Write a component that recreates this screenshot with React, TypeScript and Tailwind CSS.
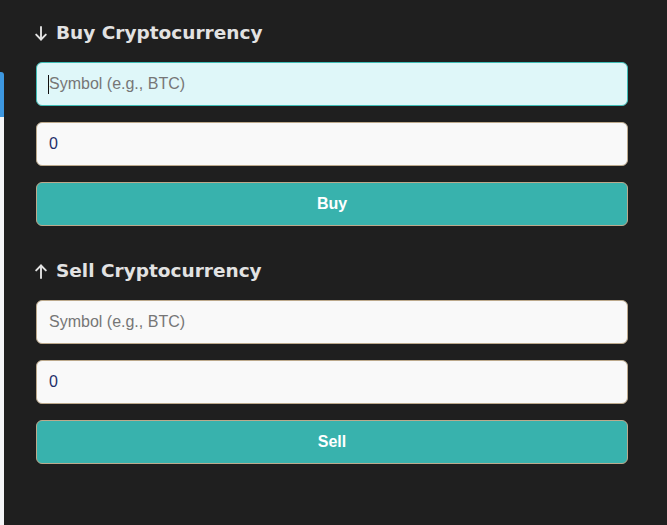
import React from "react";

function Arrow({ up }: { up?: boolean }) {
  return (
    <svg width="12" height="15" viewBox="0 0 12 15" className={up ? "shrink-0 rotate-180" : "shrink-0"} fill="none" stroke="#e2e2e2" strokeWidth="1.9" strokeLinecap="round" strokeLinejoin="round">
      <path d="M6 1 V13.5" />
      <path d="M1.2 8.6 L6 13.5 L10.8 8.6" />
    </svg>
  );
}

function Section({ up, title, button, focused }: { up?: boolean; title: string; button: string; focused?: boolean }) {
  return (
    <div className="flex flex-col">
      <h2 className="h-[26px] leading-[26px] text-[18.5px] font-bold text-[#e2e2e2] mb-[16px] flex items-center" style={{ fontFamily: '"DejaVu Sans", Verdana, sans-serif' }}>
        <span className="w-[21px] shrink-0 flex items-center -ml-[1px]">
          <Arrow up={up} />
        </span>
        <span>{title}</span>
      </h2>
      <div className="flex flex-col gap-[16px]">
        <div
          className={
            focused
              ? "h-[44px] rounded-[6px] border border-[#3fbdb6] bg-[#dff7f9] flex items-center pl-[12px] text-[16px] text-[#767676]"
              : "h-[44px] rounded-[6px] border border-[#bca98c] bg-[#f9f9f9] flex items-center pl-[12px] text-[16px] text-[#767676]"
          }
          style={{ fontFamily: '"Liberation Sans", Arial, sans-serif' }}
        >
          {focused ? <span className="w-px h-[19px] bg-[#111] -ml-[1px]" /> : null}
          Symbol (e.g., BTC)
        </div>
        <div
          className="h-[44px] rounded-[6px] border border-[#bca98c] bg-[#f9f9f9] flex items-center pl-[12px] text-[16px] text-[#1f2f6a]"
          style={{ fontFamily: '"Liberation Sans", Arial, sans-serif' }}
        >
          0
        </div>
        <button
          className="h-[44px] rounded-[6px] border border-[#bca98c] bg-[#38b2ad] flex items-center justify-center text-[16px] font-bold text-white"
          style={{ fontFamily: '"Liberation Sans", Arial, sans-serif' }}
        >
          {button}
        </button>
      </div>
    </div>
  );
}

export default function App() {
  return (
    <div className="w-[667px] h-[525px] bg-[#1f1f1f] flex overflow-hidden">
      <div className="w-[4px] pt-[72px] flex flex-col shrink-0">
        <div className="h-[45px] bg-[#3d97e0] rounded-tr-[3px]" />
        <div className="flex-1 bg-[#f4f5f7]" />
      </div>
      <div className="pl-[32px] pt-[20px] w-[624px] flex flex-col gap-[32px]">
        <Section title="Buy Cryptocurrency" button="Buy" focused />
        <Section up title="Sell Cryptocurrency" button="Sell" />
      </div>
    </div>
  );
}
